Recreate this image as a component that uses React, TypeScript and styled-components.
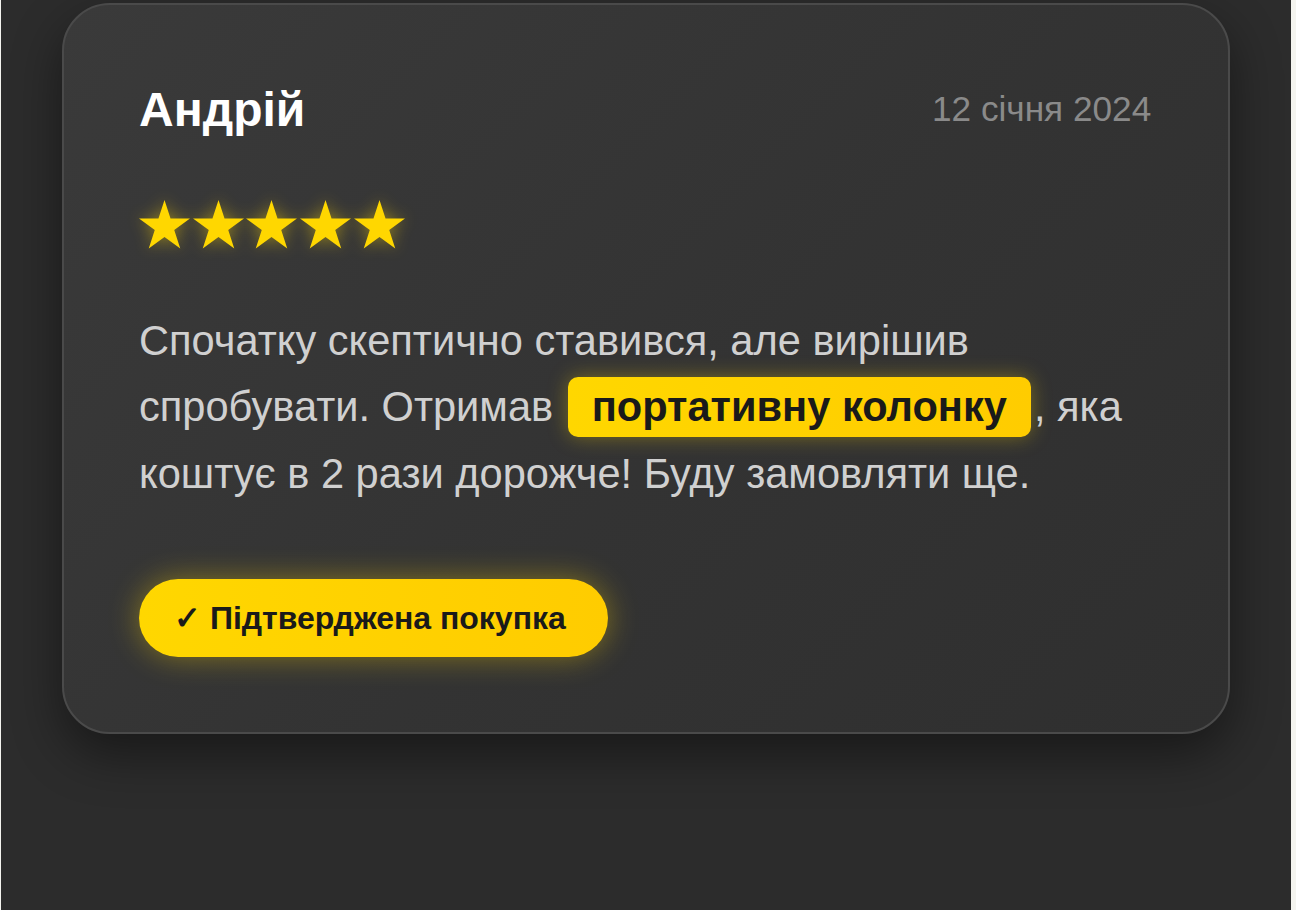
import React from "react";
import styled, { createGlobalStyle } from "styled-components";

const GlobalStyle = createGlobalStyle`
  html, body {
    margin: 0;
    padding: 0;
    background: #f4f4ef;
  }
  body {
    font-family: "Liberation Sans", Arial, sans-serif;
  }
  * { box-sizing: border-box; }
`;

const Page = styled.div`
  width: 1290px;
  min-height: 910px;
  margin-left: 1px;
  background: #2c2c2c;
  padding: 3px 61px 0;
`;

const Card = styled.article`
  width: 1168px;
  border: 2px solid #4a4a4a;
  border-radius: 48px;
  background: linear-gradient(135deg, #3a3a3a 0%, #333333 55%, #2f2f2f 100%);
  box-shadow: 0 20px 50px rgba(0, 0, 0, 0.45);
  padding: 76.8px 76.8px 74.8px 75px;
`;

const Header = styled.header`
  display: flex;
  justify-content: space-between;
  align-items: center;
`;

const Name = styled.h3`
  margin: 0;
  font-size: 48px;
  font-weight: 700;
  color: #ffffff;
`;

const DateText = styled.span`
  font-size: 35.2px;
  color: #8a8a8a;
`;

const Stars = styled.div`
  margin-top: 63px;
  display: flex;
  gap: 2.7px;
  filter: drop-shadow(0 0 8px rgba(255, 215, 0, 0.45));
`;

const StarIcon = styled.svg`
  display: block;
  width: 51px;
  height: 49px;
  fill: #ffd700;
`;

const Text = styled.p`
  margin: 59px 0 0;
  font-size: 41.6px;
  line-height: 1.6;
  color: #d0d0d0;
`;

const Highlight = styled.span`
  background: linear-gradient(90deg, #ffd700 0%, #ffcc00 100%);
  color: #1a1a1a;
  font-weight: 700;
  padding: 6.4px 24px;
  margin: 0 3px;
  border-radius: 10px;
  box-shadow: 0 0 20px rgba(255, 215, 0, 0.35);
`;

const Badge = styled.div`
  display: inline-block;
  margin-top: 72px;
  padding: 20px 42px 20px 35px;
  border-radius: 50px;
  background: linear-gradient(90deg, #ffd700 0%, #ffcc00 100%);
  color: #1a1a1a;
  font-size: 32px;
  font-weight: 700;
  box-shadow: 0 0 30px rgba(255, 215, 0, 0.4);
`;

const STAR_POINTS =
  "25.5,0 31.52,18.52 50.99,18.52 35.24,29.96 41.25,48.48 25.5,37.04 9.75,48.48 15.76,29.96 0.01,18.52 19.48,18.52";

const Star = () => (
  <StarIcon viewBox="0 0 51 49" aria-hidden="true">
    <polygon points={STAR_POINTS} />
  </StarIcon>
);

export default function App() {
  return (
    <>
      <GlobalStyle />
      <Page>
        <Card>
          <Header>
            <Name>Андрій</Name>
            <DateText>12 січня 2024</DateText>
          </Header>
          <Stars role="img" aria-label="5 з 5">
            {[0, 1, 2, 3, 4].map((i) => (
              <Star key={i} />
            ))}
          </Stars>
          <Text>
            Спочатку скептично ставився, але вирішив спробувати. Отримав{" "}
            <Highlight>портативну колонку</Highlight>, яка коштує в 2 рази
            дорожче! Буду замовляти ще.
          </Text>
          <Badge>✓ Підтверджена покупка</Badge>
        </Card>
      </Page>
    </>
  );
}
